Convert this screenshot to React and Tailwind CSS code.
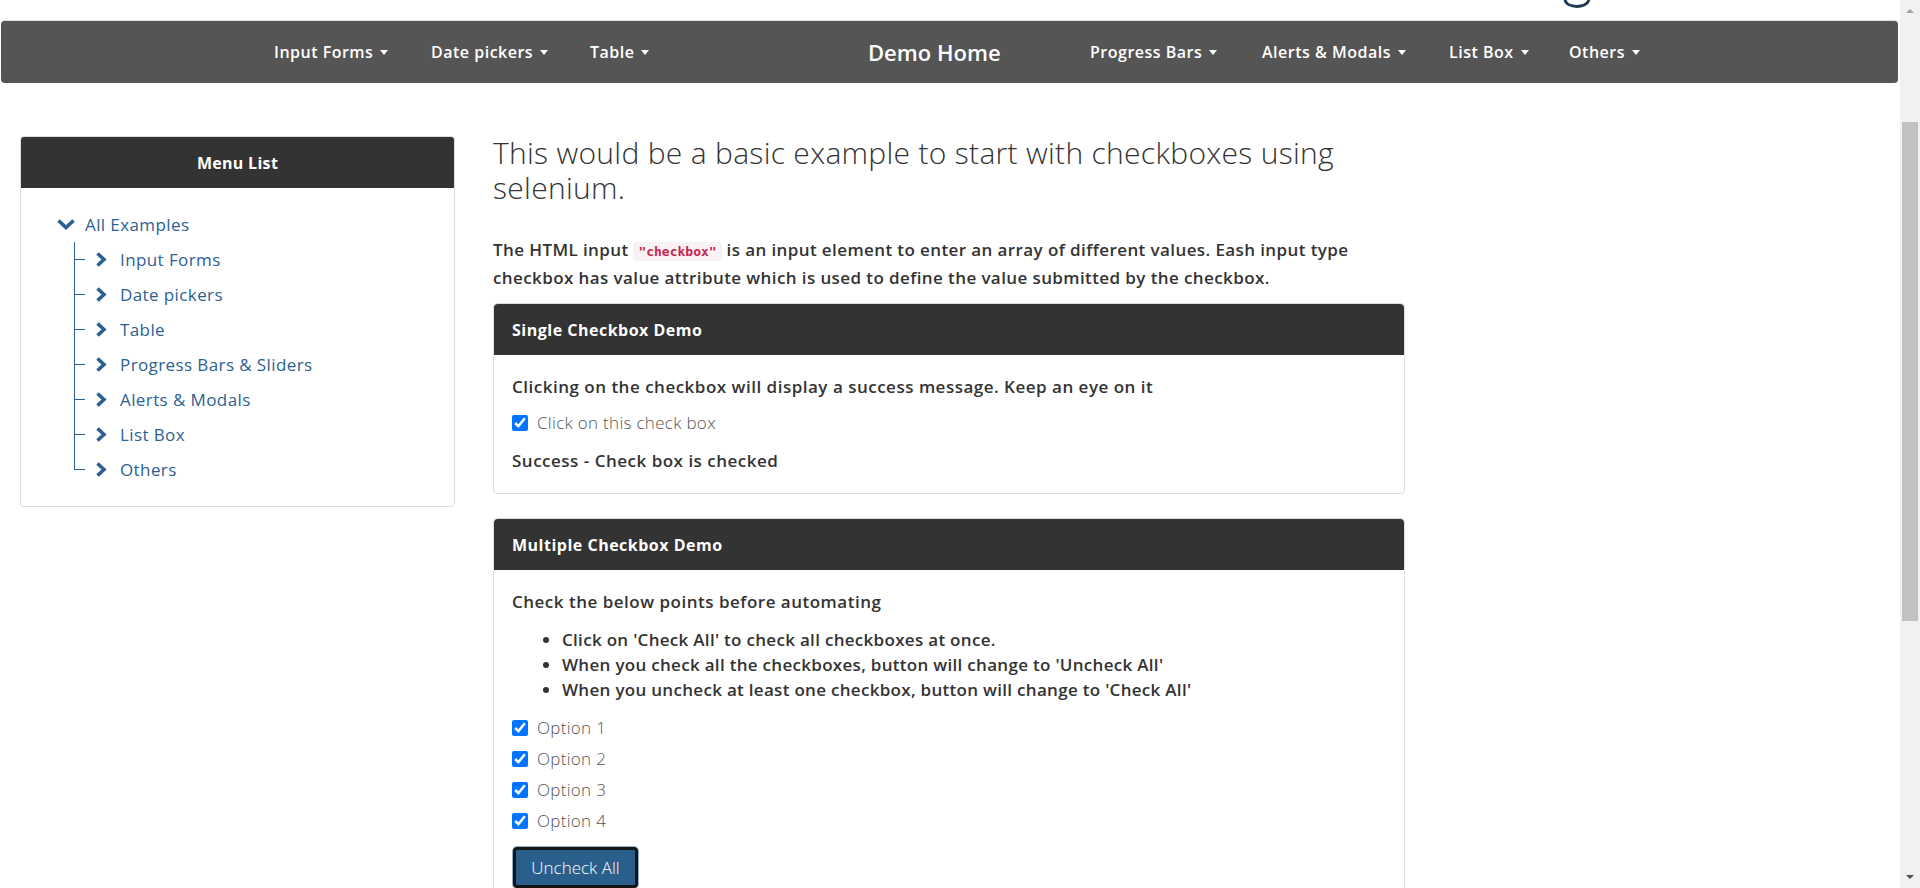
import React from 'react';

const sans = "font-['Open_Sans','Noto_Sans',sans-serif]";

const Caret = () => (
  <span className="inline-block ml-[7px] w-0 h-0 border-x-[4px] border-x-transparent border-t-[5px] border-t-white" />
);

const NavItem = ({ label, width }) => (
  <div className={`${width} shrink-0 flex items-center text-[16px] tracking-[0.5px] font-semibold text-white`}>
    <span>{label}</span>
    <Caret />
  </div>
);

const ChevronRight = () => (
  <svg width="12" height="15" viewBox="0 0 12 15" className="ml-[10px] shrink-0">
    <polyline points="2.5,1.5 9,7.5 2.5,13.5" fill="none" stroke="#2c5f93" strokeWidth="3.6" strokeLinejoin="miter" />
  </svg>
);

const ChevronDown = () => (
  <svg width="18" height="11" viewBox="0 0 18 11" className="shrink-0">
    <polyline points="1.5,1.5 9,8.5 16.5,1.5" fill="none" stroke="#2c5f93" strokeWidth="3.6" strokeLinejoin="miter" />
  </svg>
);

const treeItems = ['Input Forms', 'Date pickers', 'Table', 'Progress Bars & Sliders', 'Alerts & Modals', 'List Box', 'Others'];

const TreeRow = ({ label, last }) => (
  <div className="flex items-stretch h-[35px]">
    {/* connector: vertical + tick */}
    <div className="flex flex-col w-[11px] shrink-0">
      <div className="h-1/2 border-l border-b border-[#2c5f93]" />
      <div className={`h-1/2 ${last ? '' : 'border-l border-[#2c5f93]'}`} />
    </div>
    <div className="flex items-center">
      <ChevronRight />
      <span className="ml-[13px] text-[17px] tracking-[0.4px] font-medium text-[#2c5f93]">{label}</span>
    </div>
  </div>
);

const Checkbox = ({ label }) => (
  <label className="flex items-center h-[24px]">
    <input type="checkbox" defaultChecked className="m-0 w-4 h-4 accent-[#0075ff]" />
    <span className="ml-[9px] text-[17px] tracking-[0.3px] font-light text-[#555]">{label}</span>
  </label>
);

const CardHeader = ({ title }) => (
  <div className="h-[51px] bg-[#333] rounded-t-[4px] flex items-center px-[18px] text-[16px] tracking-[0.5px] font-bold text-white">
    {title}
  </div>
);

export default function App() {
  return (
    <div className={`${sans} w-[1920px] h-[888px] overflow-hidden flex bg-white text-[#333]`}>
      <div className="flex-1 flex flex-col overflow-hidden">
        {/* top strip with cut-off logo */}
        <div className="h-[20px] shrink-0 pl-[1563px]">
          <svg width="28" height="8" viewBox="0 0 28 8">
            <path d="M2 0 C 4 8.5, 23 8.5, 26 0" fill="none" stroke="#1d3a52" strokeWidth="3" />
          </svg>
        </div>

        {/* navbar */}
        <nav className="shrink-0 ml-[1px] mr-[2px] h-[63px] bg-[#555] rounded-[4px] border-t border-[#ddd] flex items-center pl-[273px]">
          <NavItem label="Input Forms" width="w-[157px]" />
          <NavItem label="Date pickers" width="w-[159px]" />
          <NavItem label="Table" width="w-[278px]" />
          <div className="w-[222px] shrink-0 text-[22px] font-semibold text-white">Demo Home</div>
          <NavItem label="Progress Bars" width="w-[172px]" />
          <NavItem label="Alerts & Modals" width="w-[187px]" />
          <NavItem label="List Box" width="w-[120px]" />
          <NavItem label="Others" width="w-[120px]" />
        </nav>

        <div className="shrink-0 flex items-start pt-[53px] pl-[20px]">
          {/* sidebar */}
          <aside className="w-[435px] shrink-0 border border-[#ddd] rounded-[4px]">
            <div className="h-[51px] bg-[#333] rounded-t-[3px] flex items-center justify-center text-[16px] tracking-[0.3px] font-bold text-white">
              Menu List
            </div>
            <div className="pt-[19px] pb-[19px] pl-[36px]">
              <div className="flex items-center h-[35px]">
                <ChevronDown />
                <span className="ml-[10px] text-[17px] tracking-[0.4px] font-medium text-[#2c5f93]">All Examples</span>
              </div>
              <div className="ml-[17px]">
                {treeItems.map((t, i) => (
                  <TreeRow key={t} label={t} last={i === treeItems.length - 1} />
                ))}
              </div>
            </div>
          </aside>

          {/* main column */}
          <main className="ml-[38px] w-[912px] shrink-0">
            <h3 className="text-[30px] leading-[35px] tracking-[0.3px] font-light text-[#333] -mt-[1px]">
              This would be a basic example to start with checkboxes using<br />selenium.
            </h3>
            <p className="mt-[32px] text-[17px] leading-[26px] tracking-[0.4px] font-semibold">
              The HTML input{' '}
              <code className="px-[5px] py-[2px] rounded-[4px] bg-[#f9f2f4] text-[#c7254e] text-[13px] tracking-normal font-bold font-['DejaVu_Sans_Mono',monospace]">"checkbox"</code>{' '}
              is an input element to enter an array of different values. Eash input type<br />
              checkbox has value attribute which is used to define the value submitted by the checkbox.
            </p>

            <section className="mt-[12px] border border-[#ddd] rounded-[4px]">
              <CardHeader title="Single Checkbox Demo" />
              <div className="px-[18px] pt-[20px] pb-[20px] text-[17px] leading-[24px] tracking-[0.5px] font-semibold">
                <p>Clicking on the checkbox will display a success message. Keep an eye on it</p>
                <div className="mt-[12px]">
                  <Checkbox label="Click on this check box" />
                </div>
                <p className="mt-[14px]">Success - Check box is checked</p>
              </div>
            </section>

            <section className="mt-[24px] border border-[#ddd] rounded-[4px]">
              <CardHeader title="Multiple Checkbox Demo" />
              <div className="px-[18px] pt-[20px] pb-[20px] text-[17px] leading-[24px] tracking-[0.5px] font-semibold">
                <p>Check the below points before automating</p>
                <ul className="mt-[13px] list-disc pl-[50px] leading-[25px] tracking-[0.3px]">
                  <li>Click on 'Check All' to check all checkboxes at once.</li>
                  <li>When you check all the checkboxes, button will change to 'Uncheck All'</li>
                  <li>When you uncheck at least one checkbox, button will change to 'Check All'</li>
                </ul>
                <div className="mt-[14px] flex flex-col gap-[7px]">
                  <Checkbox label="Option 1" />
                  <Checkbox label="Option 2" />
                  <Checkbox label="Option 3" />
                  <Checkbox label="Option 4" />
                </div>
                <div className="mt-[13px]">
                  <button className="h-[43px] w-[127px] rounded-[5px] border border-[#8fb0cc] p-0">
                    <span className="flex items-center justify-center h-full w-full rounded-[4px] border-[3px] border-[#151515] bg-[#2a5f8c] text-white text-[17px] tracking-normal font-light">
                      Uncheck All
                    </span>
                  </button>
                </div>
              </div>
            </section>
          </main>
        </div>
      </div>

      {/* scrollbar */}
      <div className="w-[20px] shrink-0 bg-[#f1f1f1] flex flex-col items-center">
        <div className="mt-[9px] w-0 h-0 border-x-[4px] border-x-transparent border-b-[4px] border-b-[#a3a3a3]" />
        <div className="mt-[109px] w-[16px] h-[499px] bg-[#c1c1c1]" />
        <div className="mt-auto mb-[9px] w-0 h-0 border-x-[4px] border-x-transparent border-t-[4px] border-t-[#505050]" />
      </div>
    </div>
  );
}
